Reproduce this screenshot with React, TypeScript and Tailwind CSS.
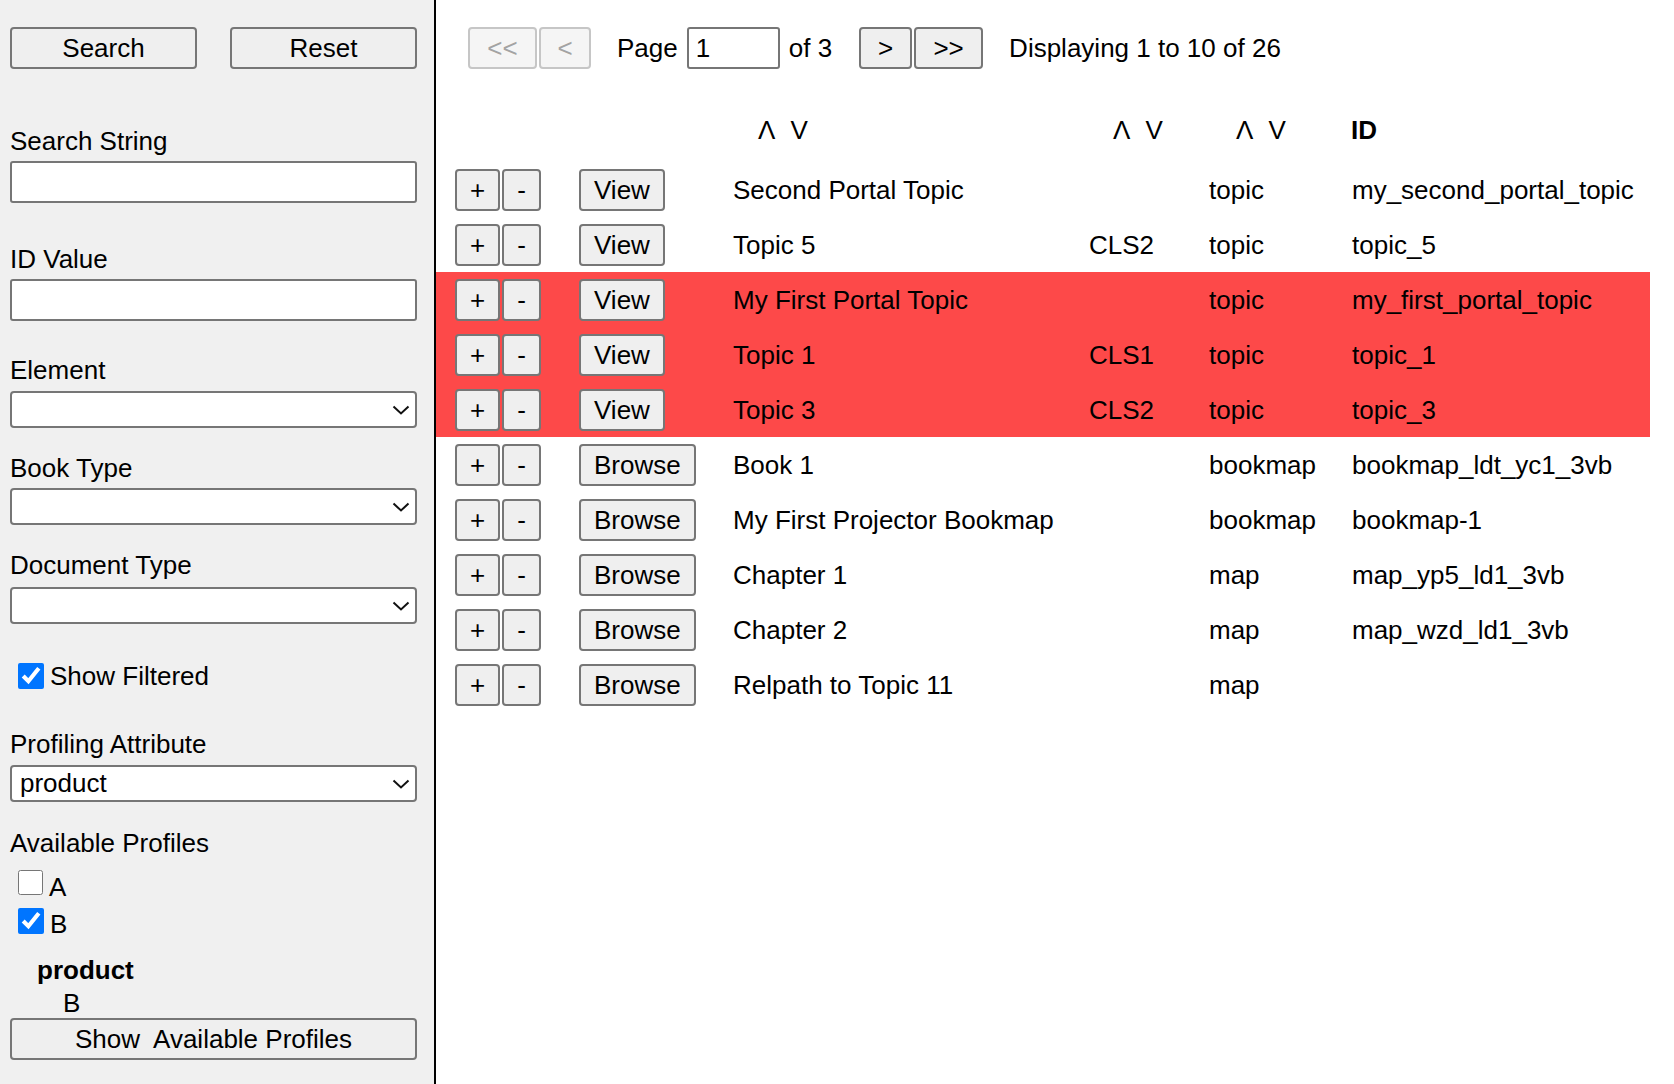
import React from "react";

type Row = {
  action: "View" | "Browse";
  title: string;
  cls: string;
  type: string;
  id: string;
  flagged?: boolean;
};

const ROWS: Row[] = [
  { action: "View", title: "Second Portal Topic", cls: "", type: "topic", id: "my_second_portal_topic" },
  { action: "View", title: "Topic 5", cls: "CLS2", type: "topic", id: "topic_5" },
  { action: "View", title: "My First Portal Topic", cls: "", type: "topic", id: "my_first_portal_topic", flagged: true },
  { action: "View", title: "Topic 1", cls: "CLS1", type: "topic", id: "topic_1", flagged: true },
  { action: "View", title: "Topic 3", cls: "CLS2", type: "topic", id: "topic_3", flagged: true },
  { action: "Browse", title: "Book 1", cls: "", type: "bookmap", id: "bookmap_ldt_yc1_3vb" },
  { action: "Browse", title: "My First Projector Bookmap", cls: "", type: "bookmap", id: "bookmap-1" },
  { action: "Browse", title: "Chapter 1", cls: "", type: "map", id: "map_yp5_ld1_3vb" },
  { action: "Browse", title: "Chapter 2", cls: "", type: "map", id: "map_wzd_ld1_3vb" },
  { action: "Browse", title: "Relpath to Topic 11", cls: "", type: "map", id: "" },
];

const btn =
  "h-[42px] bg-[#efefef] border-2 border-[#767676] rounded-[4px] px-[13px] leading-[30px] text-black";

function Label({ children, className }: { children: React.ReactNode; className: string }) {
  return <div className={`h-[30px] leading-[30px] ${className}`}>{children}</div>;
}

function Select({ value, className }: { value?: string; className: string }) {
  return (
    <div className={`relative ${className}`}>
      <div className="h-[37px] w-full bg-white border-2 border-[#767676] rounded-[4px] pl-[8px] leading-[32px]">
        {value ?? ""}
      </div>
      {/* chevron */}
      <svg
        className="absolute right-[7px] top-[14px]"
        width="18"
        height="10"
        viewBox="0 0 18 10"
        fill="none"
      >
        <polyline points="1.5,1.5 9,8.5 16.5,1.5" stroke="#111" strokeWidth="2" />
      </svg>
    </div>
  );
}

function Sidebar() {
  return (
    <aside className="w-[436px] shrink-0 h-full bg-[#f0f0f0] border-r-2 border-black pl-[10px] pr-[17px] pt-[27px] flex flex-col">
      <div className="flex justify-between">
        <button className={`${btn} w-[187px]`}>Search</button>
        <button className={`${btn} w-[187px]`}>Reset</button>
      </div>

      <Label className="mt-[57px]">Search String</Label>
      <input className="mt-[5px] h-[42px] bg-white border-2 border-[#767676] rounded-[3px] px-[8px]" />

      <Label className="mt-[41px]">ID Value</Label>
      <input className="mt-[5px] h-[42px] bg-white border-2 border-[#767676] rounded-[3px] px-[8px]" />

      <Label className="mt-[34px]">Element</Label>
      <Select className="mt-[6px]" />

      <Label className="mt-[25px]">Book Type</Label>
      <Select className="mt-[5px]" />

      <Label className="mt-[25px]">Document Type</Label>
      <Select className="mt-[7px]" />

      <label className="mt-[37px] h-[30px] flex items-center leading-[30px]">
        <input type="checkbox" defaultChecked className="ml-[8px] mr-[6px] m-0 w-[26px] h-[26px] accent-[#0075ff]" />
        Show Filtered
      </label>

      <Label className="mt-[38px]">Profiling Attribute</Label>
      <Select className="mt-[6px]" value="product" />

      <Label className="mt-[26px]">Available Profiles</Label>
      <label className="mt-[14px] h-[30px] flex items-center leading-[30px]">
        <input type="checkbox" className="ml-[8px] mr-[6px] mb-[9px] w-[25px] h-[25px] accent-[#0075ff]" />
        A
      </label>
      <label className="mt-[7px] h-[30px] flex items-center leading-[30px]">
        <input type="checkbox" defaultChecked className="ml-[8px] mr-[6px] mb-[7px] w-[26px] h-[26px] accent-[#0075ff]" />
        B
      </label>

      <div className="mt-[16px] ml-[27px] h-[30px] leading-[30px] font-bold">product</div>
      <div className="mt-[3px] ml-[53px] h-[30px] leading-[30px]">B</div>

      <button className={`${btn} h-[41px] w-full`}>Show&nbsp; Available Profiles</button>
    </aside>
  );
}

function Pager() {
  const off =
    "h-[42px] bg-[#f5f5f5] border-2 border-[#c6c6c6] rounded-[4px] leading-[30px] text-[#a3a3a3]";
  return (
    <div className="pl-[32px] pt-[27px] flex items-center h-[69px] box-border">
      <button className={`${off} w-[69px]`} disabled>
        &lt;&lt;
      </button>
      <button className={`${off} w-[52px] ml-[2px]`} disabled>
        &lt;
      </button>
      <span className="ml-[26px]">Page</span>
      <input
        defaultValue="1"
        className="ml-[9px] w-[93px] h-[42px] bg-white border-2 border-[#767676] rounded-[3px] px-[7px]"
      />
      <span className="ml-[9px]">of 3</span>
      <button className={`${btn} w-[53px] ml-[27px] px-0`}>&gt;</button>
      <button className={`${btn} w-[69px] ml-[2px] px-0`}>&gt;&gt;</button>
      <span className="ml-[26px]">Displaying 1 to 10 of 26</span>
    </div>
  );
}

function SortArrows() {
  return (
    <span className="inline-flex items-center">
      <span>Λ</span>
      <span className="inline-block w-[15px]" />
      <span>V</span>
    </span>
  );
}

const cols = "grid grid-cols-[124px_154px_356px_120px_143px_1fr] pl-[19px]";

function ResultsTable() {
  return (
    <div className="mr-[24px]">
      <div className={`${cols} mt-[46px] h-[47px] items-start leading-[30px]`}>
        <div />
        <div />
        <div className="pl-[25px]">
          <SortArrows />
        </div>
        <div className="pl-[24px]">
          <SortArrows />
        </div>
        <div className="pl-[27px]">
          <SortArrows />
        </div>
        <div className="font-bold -ml-[1px]">ID</div>
      </div>
      {ROWS.map((r, i) => (
        <div
          key={i}
          className={`${cols} h-[55px] items-center leading-[30px] ${r.flagged ? "bg-[#fd4949]" : ""}`}
        >
          <div className="flex">
            <button className={btn}>+</button>
            <button className={`${btn} ml-[2px]`}>-</button>
          </div>
          <div>
            <button className={btn}>{r.action}</button>
          </div>
          <div className="whitespace-nowrap">{r.title}</div>
          <div>{r.cls}</div>
          <div>{r.type}</div>
          <div className="whitespace-nowrap">{r.id}</div>
        </div>
      ))}
    </div>
  );
}

export default function App() {
  return (
    <div className="h-screen w-full flex bg-white text-black text-[26px] leading-[30px] font-['Liberation_Sans',Arial,sans-serif] overflow-hidden">
      <Sidebar />
      <main className="flex-1 min-w-0">
        <Pager />
        <ResultsTable />
      </main>
    </div>
  );
}
